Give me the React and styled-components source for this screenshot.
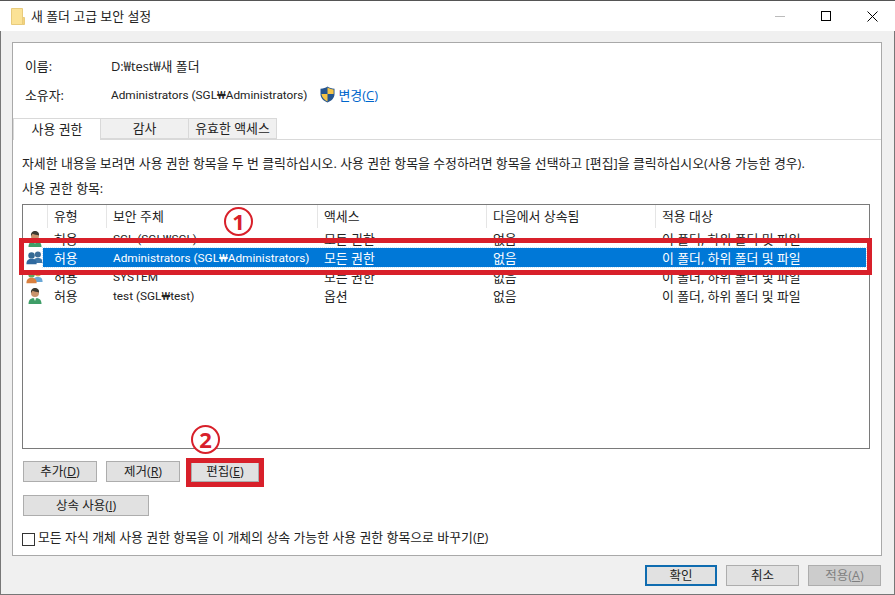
import React from 'react';
import styled, { createGlobalStyle } from 'styled-components';

const FONT = '"Open Sans", "Noto Sans CJK KR", sans-serif';

const GlobalStyle = createGlobalStyle`
  html, body {
    margin: 0;
    padding: 0;
    width: 895px;
    height: 595px;
    overflow: hidden;
    background: #f0f0f0;
  }
  #root {
    width: 895px;
    height: 595px;
  }
`;

const ACCESS_ROWS = [
  { icon: 'user', principal: 'SGL (SGL₩SGL)', access: '모든 권한' },
  { icon: 'group', principal: 'Administrators (SGL₩Administrators)', access: '모든 권한', selected: true },
  { icon: 'system', principal: 'SYSTEM', access: '모든 권한' },
  { icon: 'user', principal: 'test (SGL₩test)', access: '옵션' },
];

const FolderIcon = () => (
  <svg width="14" height="17" viewBox="0 0 14 17">
    <path d="M0.5 0.5 H11.5 V16.5 H0.5 Z" fill="#fbe296" stroke="#e8cb7c" />
    <path d="M11.5 9.5 H13.5 V16.5 H11.5 Z" fill="#f5d37c" stroke="#e8cb7c" />
  </svg>
);

const ShieldIcon = () => (
  <svg width="15" height="17" viewBox="0 0 15 17">
    <path d="M7.5 0.5 C9.5 2 11.5 2.6 14.5 2.7 V8 C14.5 12 11.5 15 7.5 16.5 C3.5 15 0.5 12 0.5 8 V2.7 C3.5 2.6 5.5 2 7.5 0.5 Z" fill="#25558f" />
    <path d="M7.5 1.6 V8 H13.6 V3.5 C11.3 3.4 9.3 2.8 7.5 1.6 Z" fill="#f6c445" />
    <path d="M7.5 8 V15.4 C4.5 14.2 1.9 11.6 1.4 8 Z" fill="#f6c445" />
  </svg>
);

const UserIcon = () => (
  <svg width="16" height="18" viewBox="0 0 16 18">
    <path d="M1.5 17 C1.5 12.5 4 11 8 11 C12 11 14.5 12.5 14.5 17 Z" fill="#3f9e68" />
    <path d="M6.5 11 L8 14 L9.5 11 Z" fill="#e8f3ea" />
    <circle cx="8" cy="6" r="4" fill="#c9946d" />
    <path d="M4 6 C3.6 2.5 5.6 1 8 1 C10.5 1 12.4 2.6 12 5.4 C10 5 7 4.8 5.4 3.8 C5 4.6 4.6 5.4 4 6 Z" fill="#3b3a32" />
  </svg>
);

const GroupIcon = ({ system }) => (
  <svg width="20" height="17" viewBox="0 0 20 17">
    <circle cx="14" cy="5" r="3.6" fill={system ? '#d9a24a' : '#3f6f99'} />
    <path d="M8.5 15 C8.5 10.5 10.5 9 14 9 C17.5 9 19.5 10.5 19.5 15 Z" fill={system ? '#6aa7d6' : '#3f77a8'} />
    <circle cx="6.5" cy="6" r="3.8" fill={system ? '#5fa860' : '#356a94'} />
    <path d="M0.5 16.5 C0.5 11.5 3 10 6.5 10 C10 10 12.5 11.5 12.5 16.5 Z" fill={system ? '#d9803f' : '#2f6aa0'} />
  </svg>
);

const rowIcon = (type) => {
  switch (type) {
    case 'user':
      return <UserIcon />;
    case 'group':
      return <GroupIcon />;
    default:
      return <GroupIcon system />;
  }
};

const App = () => (
  <Window>
    <GlobalStyle />
    <TitleBar>
      <FolderIcon />
      <TitleText>새 폴더 고급 보안 설정</TitleText>
      <WindowControls>
        <ControlButton aria-label="최소화">
          <svg width="10" height="10" viewBox="0 0 10 10"><path d="M0 5.5 H10" stroke="#bbb" /></svg>
        </ControlButton>
        <ControlButton aria-label="최대화">
          <svg width="10" height="10" viewBox="0 0 10 10"><rect x="0.5" y="0.5" width="9" height="9" fill="none" stroke="#000" /></svg>
        </ControlButton>
        <ControlButton aria-label="닫기">
          <svg width="11" height="11" viewBox="0 0 11 11"><path d="M0.5 0.5 L10.5 10.5 M10.5 0.5 L0.5 10.5" stroke="#000" /></svg>
        </ControlButton>
      </WindowControls>
    </TitleBar>

    <Body>
      <Panel>
        <InfoRow>
          <InfoLabel>이름:</InfoLabel>
          <span>D:₩test₩새 폴더</span>
        </InfoRow>
        <InfoRow>
          <InfoLabel>소유자:</InfoLabel>
          <LatinText>Administrators (SGL₩Administrators)</LatinText>
          <ChangeLink>
            <ShieldIcon />
            <LinkText>변경(<u>C</u>)</LinkText>
          </ChangeLink>
        </InfoRow>

        <Tabs>
          <Tab $active $width={88}>사용 권한</Tab>
          <Tab $width={89}>감사</Tab>
          <Tab $width={89}>유효한 액세스</Tab>
        </Tabs>

        <Description>
          자세한 내용을 보려면 사용 권한 항목을 두 번 클릭하십시오. 사용 권한 항목을 수정하려면 항목을 선택하고 [편집]을 클릭하십시오(사용 가능한 경우).
        </Description>
        <SectionLabel>사용 권한 항목:</SectionLabel>

        <ListBox>
          <HeaderRow>
            <span />
            <HeaderCell>유형</HeaderCell>
            <HeaderCell>보안 주체</HeaderCell>
            <HeaderCell>액세스</HeaderCell>
            <HeaderCell>다음에서 상속됨</HeaderCell>
            <HeaderCell>적용 대상</HeaderCell>
          </HeaderRow>
          {ACCESS_ROWS.map((row) => (
            <Row key={row.principal}>
              <RowIcon>{rowIcon(row.icon)}</RowIcon>
              <RowCells $selected={row.selected}>
                <TypeCell>허용</TypeCell>
                <Cell><LatinText>{row.principal}</LatinText></Cell>
                <Cell>{row.access}</Cell>
                <Cell>없음</Cell>
                <Cell>이 폴더, 하위 폴더 및 파일</Cell>
              </RowCells>
            </Row>
          ))}
        </ListBox>

        <ActionRow>
          <Button $width={74}>추가(<u>D</u>)</Button>
          <Button $width={74}>제거(<u>R</u>)</Button>
          <Button $width={68}>편집(<u>E</u>)</Button>
        </ActionRow>
        <InheritRow>
          <Button $width={126}>상속 사용(<u>I</u>)</Button>
        </InheritRow>
        <CheckRow>
          <CheckBox />
          <CheckLabel>모든 자식 개체 사용 권한 항목을 이 개체의 상속 가능한 사용 권한 항목으로 바꾸기(<u>P</u>)</CheckLabel>
        </CheckRow>
      </Panel>

      <Footer>
        <Button $width={72} $primary>확인</Button>
        <Button $width={73}>취소</Button>
        <Button $width={73} $disabled>적용(<u>A</u>)</Button>
      </Footer>
    </Body>

    <Highlight $left={19} $top={238} $width={853} $height={37} />
    <Highlight $left={186} $top={458} $width={78} $height={29} />
    <Marker $left={224} $top={207}>1</Marker>
    <Marker $left={191} $top={425}>2</Marker>
  </Window>
);

const Window = styled.div`
  position: relative;
  width: 895px;
  height: 595px;
  display: flex;
  flex-direction: column;
  background: #f0f0f0;
  color: #222;
  font-family: ${FONT};
  font-size: 12.9px;
  line-height: 16px;
  overflow: hidden;
`;

const TitleBar = styled.div`
  height: 31px;
  flex: none;
  display: flex;
  align-items: center;
  padding-left: 11px;
  background: #fff;
  border-top: 1px solid #555;
  box-sizing: border-box;
`;

const TitleText = styled.span`
  margin-left: 6px;
`;

const WindowControls = styled.div`
  margin-left: auto;
  display: flex;
`;

const ControlButton = styled.div`
  width: 46px;
  height: 30px;
  display: flex;
  align-items: center;
  justify-content: center;
`;

const Body = styled.div`
  flex: 1;
  display: flex;
  flex-direction: column;
  border-left: 1px solid #777;
  border-right: 1px solid #777;
  border-bottom: 1px solid #777;
`;

const Panel = styled.div`
  margin: 11px 12px 0 11px;
  height: 514px;
  box-sizing: border-box;
  background: #fff;
  border: 1px solid #a9a9a9;
  padding: 8px 11px 0 9px;
`;

const InfoRow = styled.div`
  height: 29px;
  display: flex;
  align-items: center;
  padding-left: 3px;
`;

const InfoLabel = styled.span`
  width: 86px;
  flex: none;
`;

const LatinText = styled.span`
  font-family: Roboto, "Noto Sans CJK KR", sans-serif;
  font-size: 11.8px;
`;

const ChangeLink = styled.span`
  display: inline-flex;
  align-items: center;
  gap: 3px;
  margin-left: 13px;
`;

const LinkText = styled.span`
  color: #0066cc;
`;

const Tabs = styled.div`
  margin: 9px -11px 0 -8px;
  display: flex;
  height: 22px;
  border-bottom: 1px solid #d9d9d9;
  box-sizing: border-box;
`;

const Tab = styled.div`
  width: ${({ $width }) => $width}px;
  box-sizing: border-box;
  height: ${({ $active }) => ($active ? 22 : 21)}px;
  padding-bottom: 1px;
  display: flex;
  align-items: center;
  justify-content: center;
  background: ${({ $active }) => ($active ? '#fff' : '#f0f0f0')};
  border: 1px solid #d9d9d9;
  border-bottom: ${({ $active }) => ($active ? 'none' : '1px solid #d9d9d9')};
  margin-left: -1px;
`;

const Description = styled.div`
  margin-top: 15px;
  white-space: nowrap;
`;

const SectionLabel = styled.div`
  margin-top: 9px;
`;

const ListBox = styled.div`
  margin-top: 8px;
  height: 245px;
  box-sizing: border-box;
  border: 1px solid #7a7a7a;
`;

const HeaderRow = styled.div`
  display: grid;
  grid-template-columns: 24px 59px 211px 169px 169px 1fr;
  height: 23px;
  margin-bottom: 1px;
  align-items: center;
`;

const HeaderCell = styled.div`
  height: 100%;
  box-sizing: border-box;
  display: flex;
  align-items: center;
  padding: 0 0 1px 6px;
  border-left: 1px solid #e5e5e5;
`;

const Row = styled.div`
  display: grid;
  grid-template-columns: 20px 1fr;
  height: 19px;
  align-items: center;
  padding-right: 3px;
`;

const RowIcon = styled.div`
  display: flex;
  justify-content: center;
  padding-left: 3px;
`;

const RowCells = styled.div`
  display: grid;
  grid-template-columns: 63px 211px 169px 169px 1fr;
  height: 100%;
  align-items: center;
  background: ${({ $selected }) => ($selected ? '#0078d7' : 'transparent')};
  color: ${({ $selected }) => ($selected ? '#fff' : 'inherit')};
  outline: ${({ $selected }) => ($selected ? '1px dotted #cfe4f7' : 'none')};
`;

const Cell = styled.div`
  padding-left: 7px;
  white-space: nowrap;
`;

const TypeCell = styled(Cell)`
  padding-left: 11px;
`;

const ActionRow = styled.div`
  margin: 12px 0 0 1px;
  display: flex;
  gap: 9px;
  & > :last-child {
    margin-left: 2px;
  }
`;

const InheritRow = styled.div`
  margin: 13px 0 0 1px;
  display: flex;
`;

const Button = styled.div`
  width: ${({ $width }) => $width}px;
  height: 21px;
  box-sizing: border-box;
  display: flex;
  align-items: center;
  justify-content: center;
  background: ${({ $disabled }) => ($disabled ? '#cccccc' : '#e1e1e1')};
  color: ${({ $disabled }) => ($disabled ? '#7f7f7f' : 'inherit')};
  border: ${({ $primary }) => ($primary ? '2px solid #0f6cb0' : '1px solid #adadad')};
  font-size: 12.5px;
  white-space: pre;
`;

const CheckRow = styled.div`
  margin-top: 13px;
  display: flex;
  align-items: center;
  gap: 3px;
`;

const CheckBox = styled.span`
  width: 13px;
  height: 13px;
  box-sizing: border-box;
  border: 1px solid #333;
  background: #fff;
  flex: none;
`;

const CheckLabel = styled.span`
  padding-bottom: 5px;
`;

const Footer = styled.div`
  margin-top: 9px;
  padding-right: 13px;
  display: flex;
  justify-content: flex-end;
  gap: 9px;
`;

const Highlight = styled.div`
  position: absolute;
  left: ${({ $left }) => $left}px;
  top: ${({ $top }) => $top}px;
  width: ${({ $width }) => $width}px;
  height: ${({ $height }) => $height}px;
  box-sizing: border-box;
  border: 5px solid #d8202a;
`;

const Marker = styled.div`
  position: absolute;
  left: ${({ $left }) => $left}px;
  top: ${({ $top }) => $top}px;
  width: 29px;
  height: 29px;
  box-sizing: border-box;
  border: 2px solid #d8202a;
  border-radius: 50%;
  background: #fff;
  color: #d8202a;
  font-size: 22px;
  font-weight: 700;
  line-height: 24px;
  text-align: center;
`;

export default App;
